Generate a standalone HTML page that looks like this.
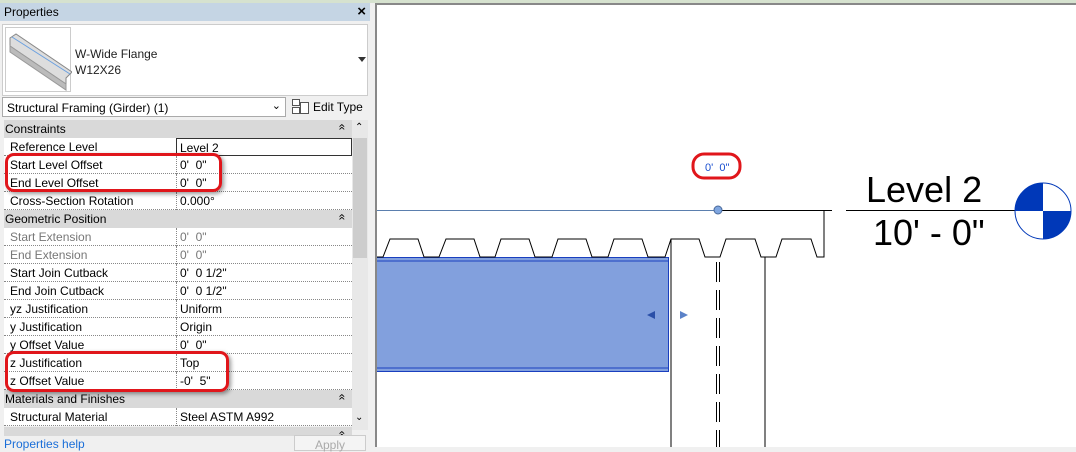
<!DOCTYPE html>
<html><head><style>
*{margin:0;padding:0;box-sizing:border-box}
body{width:1076px;height:447px;overflow:hidden;background:#f0f0f0;font-family:"Liberation Sans",sans-serif;font-size:12px;color:#000;position:relative}
.a{position:absolute}
.row{position:absolute;left:4px;width:348px;height:18px;background:#fff;border-bottom:1px dotted #888}
.row .l{position:absolute;left:6px;top:2px;white-space:nowrap}
.row .v{position:absolute;left:172px;top:0;height:18px;border-left:1px dotted #888;padding:2px 0 0 3px;width:176px;white-space:nowrap}
.g{color:#777}
.hd{position:absolute;left:4px;width:348px;height:18px;background:#d9d9d9;padding:2px 0 0 1px}
.hd:after{content:"\00AB";position:absolute;right:6px;top:0;transform:rotate(90deg);font-size:12px}
</style></head><body>
<div class="a" style="left:0;top:0;width:1076px;height:3px;background:#d6e2cf"></div>
<div class="a" style="left:0;top:3px;width:370px;height:18px;background:#c5d5e4;padding:2px 0 0 4px">Properties<span class="a" style="right:4px;top:0;font-size:15px;font-weight:bold">×</span></div>
<div class="a" style="left:0;top:21px;width:370px;height:426px;background:#f0f0f0"></div>
<div class="a" style="left:2px;top:24px;width:366px;height:72px;background:#fff;border:1px solid #ccc"></div>
<div class="a" style="left:5px;top:27px;width:66px;height:65px;background:#fff;border:1px solid #ccc">
<svg width="66" height="65"><polygon points="4,10 10,6 66,44 60,50 60,56 4,18" fill="#ddd" stroke="#888"/><line x1="6" y1="9" x2="64" y2="46" stroke="#6aa0e0"/><polygon points="4,18 60,56 60,62 4,24" fill="#bbb" stroke="#999"/></svg></div>
<div class="a" style="left:75px;top:46px;font-size:12px;line-height:16px;color:#222">W-Wide Flange<br>W12X26</div>
<div class="a" style="left:358px;top:57px;border:4px solid transparent;border-top:5px solid #333"></div>
<div class="a" style="left:2px;top:97px;width:284px;height:20px;background:#fff;border:1px solid #aaa;padding:3px 0 0 4px">Structural Framing (Girder) (1)<span class="a" style="right:4px;top:1px;font-size:11px">&#8964;</span></div>
<svg class="a" style="left:292px;top:99px" width="18" height="16"><rect x="0.5" y="0.5" width="7" height="6" fill="#fff" stroke="#555"/><rect x="0.5" y="8.5" width="7" height="6" fill="#fff" stroke="#555"/><rect x="8.5" y="3.5" width="8" height="11" fill="#fff" stroke="#555"/></svg>
<div class="a" style="left:313px;top:100px">Edit Type</div>
<div class="a" style="left:352px;top:120px;width:16px;height:310px;background:#e8e8e8"></div>
<div class="a" style="left:353px;top:138px;width:14px;height:120px;background:#cdcdcd"></div>
<div class="a" style="left:355px;top:122px;font-size:10px">&#8963;</div>
<div class="a" style="left:355px;top:412px;font-size:10px">&#8964;</div>
<div class="hd" style="top:120px">Constraints</div>
<div class="row" style="top:138px"><span class="l">Reference Level</span><span class="v" style="border:1px solid #333;top:0">Level 2</span></div>
<div class="row" style="top:156px"><span class="l">Start Level Offset</span><span class="v">0'&nbsp; 0"</span></div>
<div class="row" style="top:174px"><span class="l">End Level Offset</span><span class="v">0'&nbsp; 0"</span></div>
<div class="row" style="top:192px"><span class="l">Cross-Section Rotation</span><span class="v">0.000°</span></div>
<div class="hd" style="top:210px">Geometric Position</div>
<div class="row" style="top:228px"><span class="l g">Start Extension</span><span class="v g">0'&nbsp; 0"</span></div>
<div class="row" style="top:246px"><span class="l g">End Extension</span><span class="v g">0'&nbsp; 0"</span></div>
<div class="row" style="top:264px"><span class="l">Start Join Cutback</span><span class="v">0'&nbsp; 0 1/2"</span></div>
<div class="row" style="top:282px"><span class="l">End Join Cutback</span><span class="v">0'&nbsp; 0 1/2"</span></div>
<div class="row" style="top:300px"><span class="l">yz Justification</span><span class="v">Uniform</span></div>
<div class="row" style="top:318px"><span class="l">y Justification</span><span class="v">Origin</span></div>
<div class="row" style="top:336px"><span class="l">y Offset Value</span><span class="v">0'&nbsp; 0"</span></div>
<div class="row" style="top:354px"><span class="l">z Justification</span><span class="v">Top</span></div>
<div class="row" style="top:372px"><span class="l">z Offset Value</span><span class="v">-0'&nbsp; 5"</span></div>
<div class="hd" style="top:390px">Materials and Finishes</div>
<div class="row" style="top:408px"><span class="l">Structural Material</span><span class="v">Steel ASTM A992</span></div>
<div class="hd" style="top:427px;height:9px"></div>
<div class="a" style="left:4px;top:437px;color:#1a6ed8">Properties help</div>
<div class="a" style="left:294px;top:435px;width:72px;height:16px;border:1px solid #ccc;background:#f4f4f4;color:#aaa;padding:2px 0 0 20px">Apply</div>
<div class="a" style="left:5px;top:153px;width:217px;height:39px;border:3px solid #e0161b;border-radius:9px;box-shadow:2px 2px 4px rgba(0,0,0,.4)"></div>
<div class="a" style="left:5px;top:351px;width:224px;height:41px;border:3px solid #e0161b;border-radius:9px;box-shadow:2px 2px 4px rgba(0,0,0,.4)"></div>
<div class="a" style="left:375px;top:3px;width:701px;height:444px;background:#fff;border-left:2px solid #888;border-top:2px solid #888"></div>
<svg class="a" style="left:0;top:0" width="1076" height="447">
<rect x="377" y="257" width="291" height="114" fill="#82a0dd"/>
<path d="M377 257.5 H668.5 V371.5 H377" fill="none" stroke="#1a3fbf"/>
<line x1="377" y1="261" x2="668" y2="261" stroke="#1a3fbf"/><line x1="377" y1="368" x2="668" y2="368" stroke="#1a3fbf"/>
<path d="M377 257 H383 L390 239 H418 L424 257 H439 L446 239 H474 L480 257 H495 L501 239 H529 L535 257 H552 L558 239 H586 L592 257 H608 L614 239 H642 L648 257 H665 L671 239 H699 L705 257 H720 L726 239 H755 L761 257 H776 L782 239 H811 L817 257 H824 V210" fill="none" stroke="#000"/>
<line x1="671" y1="239" x2="671" y2="447" stroke="#000"/><line x1="765" y1="257" x2="765" y2="447" stroke="#000"/>
<line x1="716.5" y1="262" x2="716.5" y2="447" stroke="#000" stroke-dasharray="20,8"/><line x1="719.5" y1="262" x2="719.5" y2="447" stroke="#000" stroke-dasharray="20,8"/>
<line x1="377" y1="210.5" x2="718" y2="210.5" stroke="#5b7fae"/>
<line x1="718" y1="210.5" x2="832" y2="210.5" stroke="#000"/>
<line x1="846" y1="210.5" x2="1015" y2="210.5" stroke="#000"/>
<circle cx="718" cy="210" r="4" fill="#7fa6e0" stroke="#4a6a9a"/>
<polygon points="647,315 655,311 655,319" fill="#2a4fa8"/><polygon points="688,315 680,311 680,319" fill="#5b82c8"/>
<circle cx="1043" cy="211" r="28" fill="#fff" stroke="#0038b8"/>
<path d="M1043 211 H1015 A28 28 0 0 1 1043 183 Z" fill="#0038b8"/><path d="M1043 211 H1071 A28 28 0 0 1 1043 239 Z" fill="#0038b8"/>
<text x="866" y="202" font-family="Liberation Sans" font-size="36">Level 2</text>
<text x="873" y="245" font-family="Liberation Sans" font-size="36">10' - 0"</text>
<text x="705" y="171" font-family="Liberation Sans" font-size="11" fill="#1a4fd0">0'&#160; 0"</text>
<rect x="693" y="154" width="47" height="24" rx="11" fill="none" stroke="#e0161b" stroke-width="3"/>
</svg>
</body></html>
